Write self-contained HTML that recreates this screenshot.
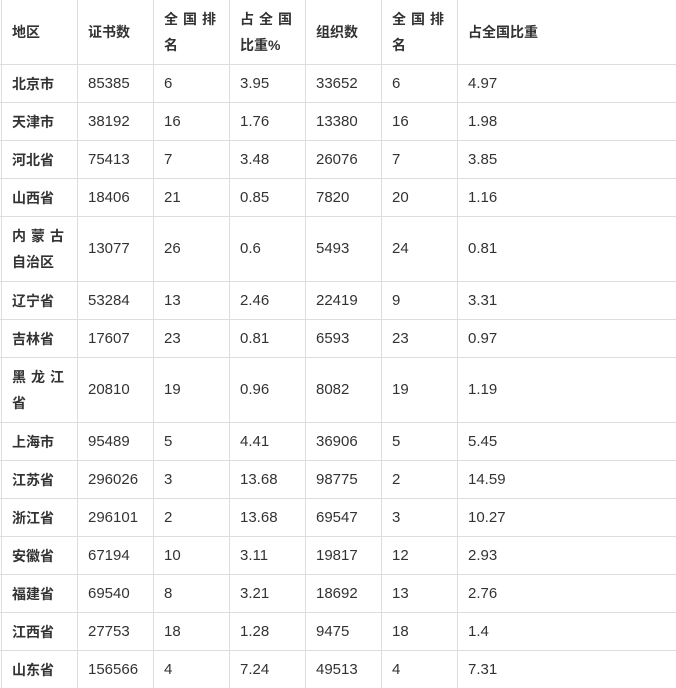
<!DOCTYPE html>
<html><head><meta charset="utf-8"><style>
body{margin:0;width:676px;height:688px;overflow:hidden;background:#fff;font-family:"Liberation Sans","Noto Sans CJK SC",sans-serif;font-size:15px;color:#333;position:relative}
.v{position:absolute;top:0;height:688px;width:1px;background:#ddd}
.h{position:absolute;left:0;width:676px;height:1px;background:#ddd}
.r{position:absolute;left:2px;display:grid;grid-template-columns:76px 76px 76px 76px 76px 76px 218px;align-items:center}
.r div{padding-left:10px;line-height:26px}
.r div:first-child{font-weight:bold;font-size:14px}
.hd div{font-weight:bold;font-size:14px}
.sp{letter-spacing:5px}
</style></head><body>
<div class="v" style="left:1px"></div><div class="v" style="left:77px"></div><div class="v" style="left:153px"></div><div class="v" style="left:229px"></div><div class="v" style="left:305px"></div><div class="v" style="left:381px"></div><div class="v" style="left:457px"></div>
<div class="h" style="top:64px"></div><div class="h" style="top:102px"></div><div class="h" style="top:140px"></div><div class="h" style="top:178px"></div><div class="h" style="top:216px"></div><div class="h" style="top:281px"></div><div class="h" style="top:319px"></div><div class="h" style="top:357px"></div><div class="h" style="top:422px"></div><div class="h" style="top:460px"></div><div class="h" style="top:498px"></div><div class="h" style="top:536px"></div><div class="h" style="top:574px"></div><div class="h" style="top:612px"></div><div class="h" style="top:650px"></div>

<div class="r hd" style="top:0;height:64px"><div>地区</div><div>证书数</div><div><span class="sp">全国排</span><br>名</div><div><span class="sp">占全国</span><br>比重%</div><div>组织数</div><div><span class="sp">全国排</span><br>名</div><div>占全国比重</div></div>
<div class="r" style="top:65px;height:37px"><div>北京市</div><div>85385</div><div>6</div><div>3.95</div><div>33652</div><div>6</div><div>4.97</div></div>
<div class="r" style="top:103px;height:37px"><div>天津市</div><div>38192</div><div>16</div><div>1.76</div><div>13380</div><div>16</div><div>1.98</div></div>
<div class="r" style="top:141px;height:37px"><div>河北省</div><div>75413</div><div>7</div><div>3.48</div><div>26076</div><div>7</div><div>3.85</div></div>
<div class="r" style="top:179px;height:37px"><div>山西省</div><div>18406</div><div>21</div><div>0.85</div><div>7820</div><div>20</div><div>1.16</div></div>
<div class="r" style="top:217px;height:64px"><div><span class="sp">内蒙古</span><br>自治区</div><div>13077</div><div>26</div><div>0.6</div><div>5493</div><div>24</div><div>0.81</div></div>
<div class="r" style="top:282px;height:37px"><div>辽宁省</div><div>53284</div><div>13</div><div>2.46</div><div>22419</div><div>9</div><div>3.31</div></div>
<div class="r" style="top:320px;height:37px"><div>吉林省</div><div>17607</div><div>23</div><div>0.81</div><div>6593</div><div>23</div><div>0.97</div></div>
<div class="r" style="top:358px;height:64px"><div><span class="sp">黑龙江</span><br>省</div><div>20810</div><div>19</div><div>0.96</div><div>8082</div><div>19</div><div>1.19</div></div>
<div class="r" style="top:423px;height:37px"><div>上海市</div><div>95489</div><div>5</div><div>4.41</div><div>36906</div><div>5</div><div>5.45</div></div>
<div class="r" style="top:461px;height:37px"><div>江苏省</div><div>296026</div><div>3</div><div>13.68</div><div>98775</div><div>2</div><div>14.59</div></div>
<div class="r" style="top:499px;height:37px"><div>浙江省</div><div>296101</div><div>2</div><div>13.68</div><div>69547</div><div>3</div><div>10.27</div></div>
<div class="r" style="top:537px;height:37px"><div>安徽省</div><div>67194</div><div>10</div><div>3.11</div><div>19817</div><div>12</div><div>2.93</div></div>
<div class="r" style="top:575px;height:37px"><div>福建省</div><div>69540</div><div>8</div><div>3.21</div><div>18692</div><div>13</div><div>2.76</div></div>
<div class="r" style="top:613px;height:37px"><div>江西省</div><div>27753</div><div>18</div><div>1.28</div><div>9475</div><div>18</div><div>1.4</div></div>
<div class="r" style="top:651px;height:37px"><div>山东省</div><div>156566</div><div>4</div><div>7.24</div><div>49513</div><div>4</div><div>7.31</div></div>
</body></html>
